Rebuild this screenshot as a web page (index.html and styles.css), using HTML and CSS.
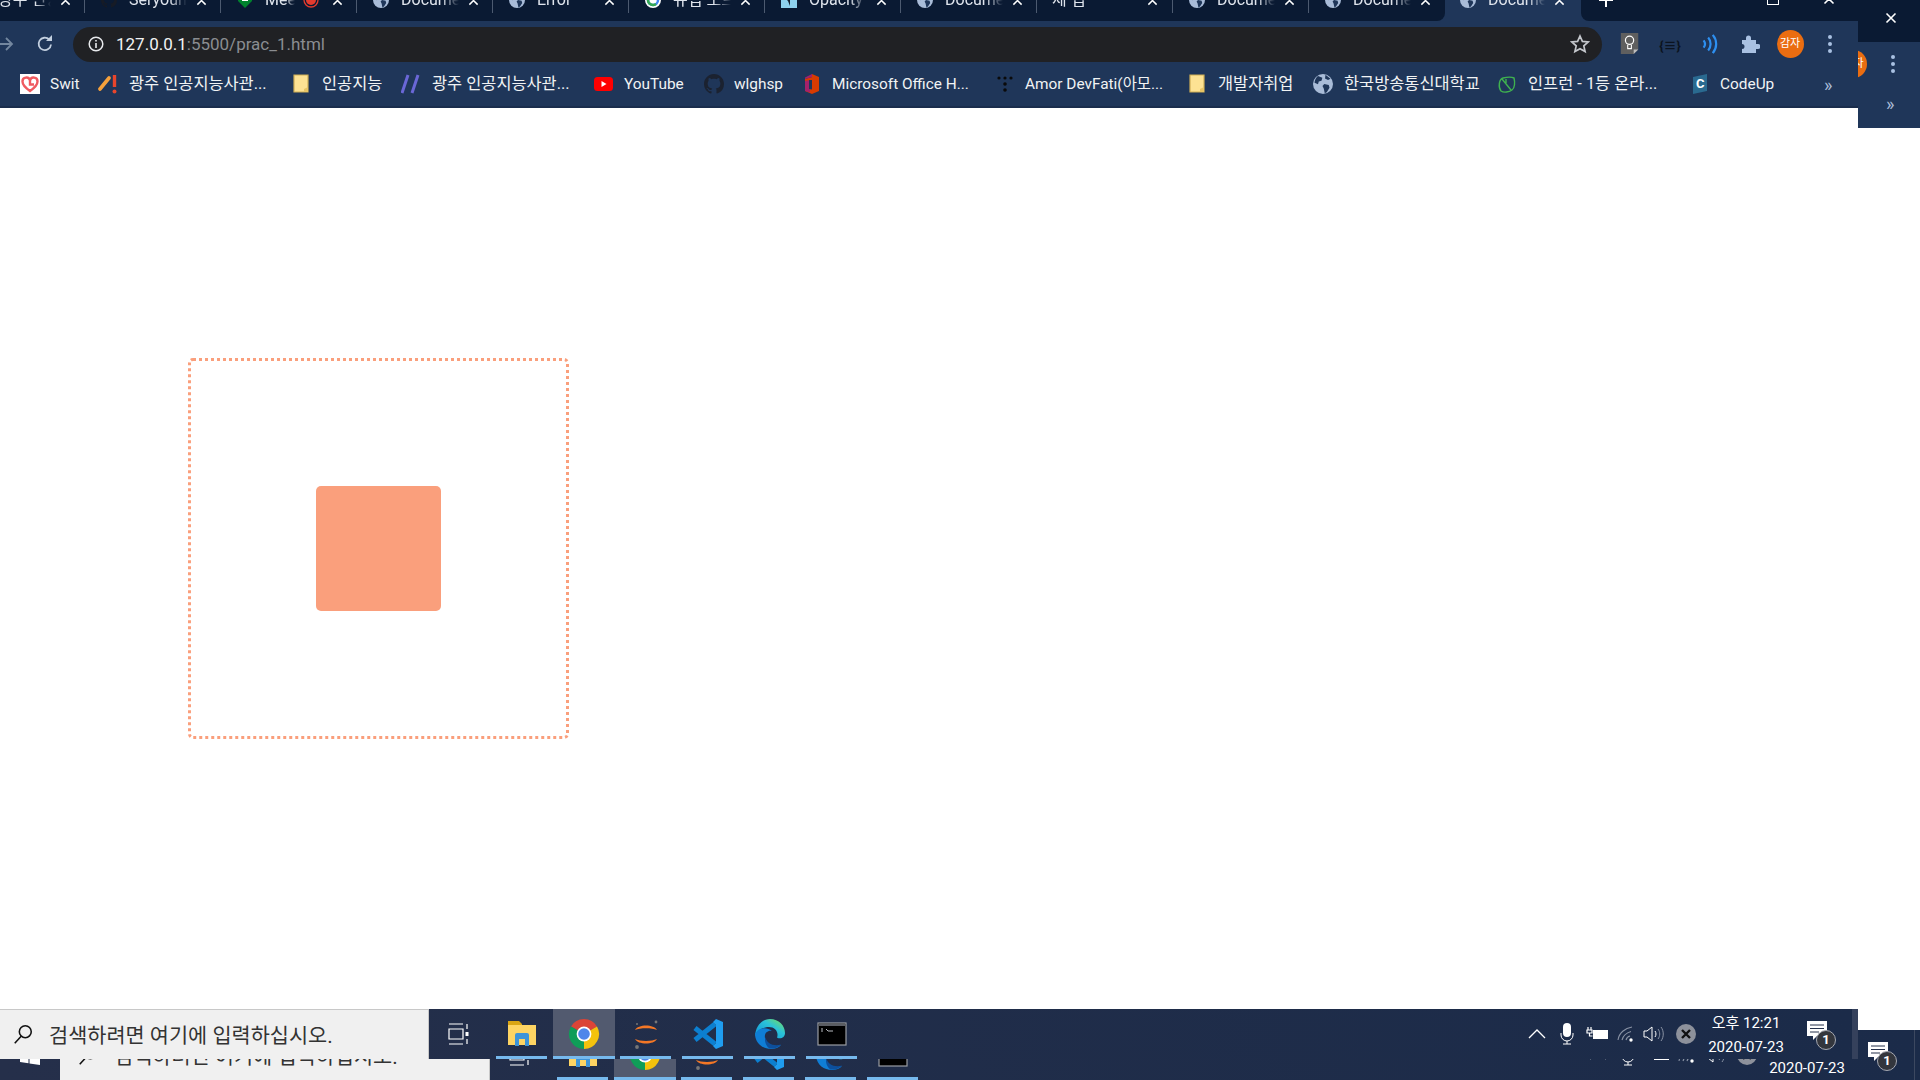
FILE: index.html
```html
<!DOCTYPE html>
<html lang="ko">
<head>
    <meta charset="UTF-8">
    <title>prac_1</title>
    <link rel="stylesheet" href="styles.css">
</head>
<body>
    <svg class="sprite" width="0" height="0">
        <defs>
            <linearGradient id="edge-top" x1="0" y1="1" x2="1" y2="0">
                <stop offset="0" stop-color="#0c8fdc"/>
                <stop offset="0.6" stop-color="#2bc3d8"/>
                <stop offset="1" stop-color="#7fe04f"/>
            </linearGradient>
            <symbol id="globe" viewBox="0 0 16 16">
                <circle cx="8" cy="8" r="8" fill="#a9bcd8"/>
                <path fill="#1f3659" d="M4 1.6 7.5 3 6.8 5.4 4.6 6 4 8.2 1.2 7C1.4 4.8 2.4 2.9 4 1.6ZM9 8l3.6.8.6 2.2L11 14.6 9.4 15.4 8.6 11.6 7.6 9.6ZM10 .6l4 3.2-2 1-2.4-1.2Z"/>
            </symbol>
            <symbol id="github" viewBox="0 0 16 16">
                <path d="M8 0C3.58 0 0 3.58 0 8c0 3.54 2.29 6.53 5.47 7.59.4.07.55-.17.55-.38 0-.19-.01-.82-.01-1.49-2.01.37-2.53-.49-2.69-.94-.09-.23-.48-.94-.82-1.13-.28-.15-.68-.52-.01-.53.63-.01 1.08.58 1.23.82.72 1.21 1.87.87 2.33.66.07-.52.28-.87.51-1.07-1.78-.2-3.64-.89-3.64-3.95 0-.87.31-1.59.82-2.15-.08-.2-.36-1.02.08-2.12 0 0 .67-.21 2.2.82.64-.18 1.32-.27 2-.27.68 0 1.36.09 2 .27 1.53-1.04 2.2-.82 2.2-.82.44 1.1.16 1.92.08 2.12.51.56.82 1.27.82 2.15 0 3.07-1.87 3.75-3.65 3.95.29.25.54.73.54 1.48 0 1.07-.01 1.93-.01 2.2 0 .21.15.46.55.38A8.013 8.013 0 0 0 16 8c0-4.42-3.58-8-8-8z"/>
            </symbol>
            <symbol id="close" viewBox="0 0 12 12">
                <path d="M1.5 1.5l9 9M10.5 1.5l-9 9" stroke="#fff" stroke-width="1.6" fill="none"/>
            </symbol>
            <symbol id="bm-folder" viewBox="0 0 16 20">
                <path d="M1 1h10l4 0v17H1Z" fill="#fde293" stroke="#cfae55" stroke-width="1.2"/>
                <path d="M15 13v5h-4v-3Z" fill="#e8c565"/>
            </symbol>
            <symbol id="chrome" viewBox="0 0 32 32">
                <path fill="#db4437" d="M16 16 3 8.5A15 15 0 0 1 29 8.5Z"/>
                <path fill="#f4c20d" d="M16 16 29 8.5A15 15 0 0 1 16 31Z"/>
                <path fill="#0f9d58" d="M16 16 16 31A15 15 0 0 1 3 8.5Z"/>
                <circle cx="16" cy="16" r="7.4" fill="#fff"/>
                <circle cx="16" cy="16" r="5.8" fill="#4d86ea"/>
            </symbol>
            <symbol id="explorer" viewBox="0 0 32 32">
                <path fill="#d9a514" d="M2 3h11l3 3v4H2Z"/>
                <path fill="#fdd463" d="M2 7h28v20H2Z"/>
                <path fill="#3d94d8" d="M9 28V17a2 2 0 0 1 2-2h10a2 2 0 0 1 2 2v11h-4v-7h-6v7Z"/>
            </symbol>
            <symbol id="jupyter" viewBox="0 0 32 32">
                <path d="M5 12C8 6 24 6 27 12 22 9.5 10 9.5 5 12ZM5 21C8 27 24 27 27 21 22 23.5 10 23.5 5 21Z" fill="#f37726"/>
                <circle cx="26" cy="4" r="1.4" fill="#767677"/>
                <circle cx="7" cy="6" r="1" fill="#767677"/>
                <circle cx="7" cy="29" r="1.9" fill="#767677"/>
            </symbol>
            <symbol id="vscode" viewBox="0 0 32 32">
                <path d="M3 10 23 26M3 22 23 6" stroke="#0c7fd0" stroke-width="5" fill="none"/>
                <path fill="#1f9df0" d="M21 4 24 1 31 4V28L24 31 21 28 24 25V7Z"/>
            </symbol>
            <symbol id="edge" viewBox="0 0 32 32">
                <path fill="url(#edge-top)" d="M16 1C25 1 31 7.5 31 15 31 20 26 21.5 23 19.5 25 14 21 9 15 9 8 9 3 13 1 18 1.5 8 8 1 16 1Z"/>
                <path fill="#0f7ed6" d="M1 17C2 26 9 31 17 31 21 31 25 29.5 27 27 20 30 12 27 11 20 10 15 14 12 18 13 12 8 3 10 1 17Z"/>
                <path fill="#0d4f9c" d="M11.5 19C12 25 20 29 27 26.5 24 30 19 31 15.5 30.5 12 28 10 23 11.5 19Z"/>
            </symbol>
            <symbol id="terminal" viewBox="0 0 32 32">
                <rect x="2" y="5" width="28" height="22" fill="#000" stroke="#9a9da3" stroke-width="1.2"/>
                <rect x="2.6" y="5.6" width="26.8" height="2.4" fill="#5a5d63"/>
                <path d="M5 11h2M5 13h2M10 11l2 2h5" stroke="#b8bbc0" stroke-width="1" fill="none"/>
            </symbol>
            <symbol id="taskview" viewBox="0 0 24 24">
                <path d="M3 2h14M3 22h14M3 7h14v10H3ZM21 2v5M21 17v5" stroke="#fff" stroke-width="1.2" fill="none"/>
                <rect x="19.5" y="10" width="3" height="4" fill="#fff"/>
            </symbol>
            <symbol id="search" viewBox="0 0 24 24">
                <circle cx="14.5" cy="9.5" r="6.5" fill="none" stroke="#111" stroke-width="1.7"/>
                <path d="M10 14.5 3 22" stroke="#111" stroke-width="1.7"/>
            </symbol>
            <symbol id="winlogo" viewBox="0 0 20 20">
                <path fill="#fff" d="M0 3 8.5 1.8V9.5H0ZM9.5 1.6 20 0V9.5H9.5ZM0 10.5H8.5V18.2L0 17ZM9.5 10.5H20V20L9.5 18.4Z"/>
            </symbol>
            <symbol id="chevron" viewBox="0 0 18 12">
                <path d="M1 10 9 2l8 8" stroke="#fff" stroke-width="1.3" fill="none"/>
            </symbol>
            <symbol id="mic" viewBox="0 0 18 22">
                <rect x="5" y="0" width="8" height="14" rx="4" fill="#fff"/>
                <path d="M3 10v2a6 6 0 0 0 12 0v-2M9 18v3M5 21h8" stroke="#fff" stroke-width="1" fill="none"/>
            </symbol>
            <symbol id="battery" viewBox="0 0 24 16">
                <path d="M3 1v3M6 1v3M2 4h5v3H2ZM4.5 7v3h3" stroke="#fff" stroke-width="1.2" fill="none"/>
                <rect x="8.5" y="4.5" width="14" height="8" fill="#fff" stroke="#fff"/>
            </symbol>
            <symbol id="wifi" viewBox="0 0 20 18">
                <path d="M1 15C2 8 8 3 15 2M5 15C6 11 9 8 14 6.5M9 15C9.5 13 11 11.5 13 11" stroke="#8a93a5" stroke-width="1.1" fill="none"/>
                <circle cx="14" cy="15" r="1.7" fill="#fff"/>
            </symbol>
            <symbol id="volume" viewBox="0 0 22 18">
                <path d="M1 6h3l5-4v14l-5-4H1ZM12 6c1.3 1.7 1.3 4.3 0 6" stroke="#fff" stroke-width="1" fill="none"/>
                <path d="M15 4c2.3 3 2.3 7 0 10M18 2c3 4 3 10 0 14" stroke="#8a93a5" stroke-width="1" fill="none"/>
            </symbol>
            <symbol id="tray-x" viewBox="0 0 20 20">
                <circle cx="10" cy="10" r="10" fill="#8d919b"/>
                <path d="M6 6l8 8M14 6l-8 8" stroke="#111" stroke-width="2.4"/>
            </symbol>
            <symbol id="notify" viewBox="0 0 22 22">
                <path fill="#fff" d="M0 0h20v15H10l-4 4v-4H0Z"/>
                <path d="M3 4h14M3 7.5h14M3 11h9" stroke="#24304b" stroke-width="1"/>
            </symbol>
        </defs>
    </svg>

    <div class="outer-screen">
        <div class="outer-chrome">
            <div class="outer-title">
                <svg class="outer-close"><use href="#close"/></svg>
            </div>
            <div class="outer-tools">
                <div class="avatar">감자</div>
                <div class="dots"><i></i><i></i><i></i></div>
            </div>
            <div class="outer-more">»</div>
        </div>
        <div class="outer-gap"></div>

        <div class="taskbar taskbar-outer">
            <div class="start"><svg class="win-icon"><use href="#winlogo"/></svg></div>
            <div class="search-box search-box-outer">
                <svg class="search-icon"><use href="#search"/></svg>
                <span class="search-text">검색하려면 여기에 입력하십시오.</span>
            </div>
            <div class="task"><svg class="task-view"><use href="#taskview"/></svg></div>
            <div class="task open"><svg class="task-icon"><use href="#explorer"/></svg></div>
            <div class="task open active"><svg class="task-icon"><use href="#chrome"/></svg></div>
            <div class="task open"><svg class="task-icon"><use href="#jupyter"/></svg></div>
            <div class="task open"><svg class="task-icon"><use href="#vscode"/></svg></div>
            <div class="task open"><svg class="task-icon"><use href="#edge"/></svg></div>
            <div class="task open"><svg class="task-icon"><use href="#terminal"/></svg></div>
            <div class="tray tray-outer">
                <svg class="tray-chevron"><use href="#chevron"/></svg>
                <svg class="tray-mic"><use href="#mic"/></svg>
                <svg class="tray-battery"><use href="#battery"/></svg>
                <svg class="tray-wifi"><use href="#wifi"/></svg>
                <svg class="tray-volume"><use href="#volume"/></svg>
                <svg class="tray-x"><use href="#tray-x"/></svg>
                <div class="clock"><span>오후 12:21</span><span>2020-07-23</span></div>
                <div class="notify">
                    <svg class="notify-icon"><use href="#notify"/></svg>
                    <span class="notify-badge">1</span>
                </div>
            </div>
            <div class="show-desktop"></div>
        </div>

        <div class="inner-screen">
            <div class="browser">
                <div class="tabstrip">
                    <div class="tabs-left">
                        <div class="tab tab-noicon tab-first"><span class="tab-title">광주 인공지능</span><svg class="tab-close"><use href="#close"/></svg></div>
                        <div class="tab">
                            <svg class="favicon favicon-git"><use href="#github"/></svg>
                            <span class="tab-title">Seryoung</span><svg class="tab-close"><use href="#close"/></svg>
                        </div>
                        <div class="tab">
                            <svg class="favicon" viewBox="0 0 16 16"><path fill="#00832d" d="M1 0h14v9l-7 7-7-7Z"/><path fill="#fff" d="M5 3h6v6H5Z"/></svg>
                            <span class="tab-title tab-title-rec">Meet</span>
                            <svg class="rec-dot" viewBox="0 0 16 16"><circle cx="8" cy="8" r="7" fill="none" stroke="#e33b2e" stroke-width="1.3"/><circle cx="8" cy="8" r="5" fill="#e33b2e"/></svg>
                            <svg class="tab-close"><use href="#close"/></svg>
                        </div>
                        <div class="tab"><svg class="favicon"><use href="#globe"/></svg><span class="tab-title">Document</span><svg class="tab-close"><use href="#close"/></svg></div>
                        <div class="tab"><svg class="favicon"><use href="#globe"/></svg><span class="tab-title">Error</span><svg class="tab-close"><use href="#close"/></svg></div>
                        <div class="tab">
                            <svg class="favicon" viewBox="0 0 16 16"><circle cx="8" cy="8" r="8" fill="#fff"/><circle cx="8" cy="8" r="5" fill="none" stroke="#4285f4" stroke-width="2.5"/><path d="M3 8a5 5 0 0 1 8-4" stroke="#ea4335" stroke-width="2.5" fill="none"/><path d="M3 8a5 5 0 0 0 8 4" stroke="#34a853" stroke-width="2.5" fill="none"/></svg>
                            <span class="tab-title">유럽 노트</span><svg class="tab-close"><use href="#close"/></svg>
                        </div>
                        <div class="tab">
                            <svg class="favicon favicon-square" viewBox="0 0 16 16"><path fill="#8ed1ee" d="M0 0h20v16H0Z"/><path fill="#12202f" d="M4 0h12L9 8v6L7 9 4 6Z"/></svg>
                            <span class="tab-title">Opacity</span><svg class="tab-close"><use href="#close"/></svg>
                        </div>
                        <div class="tab"><svg class="favicon"><use href="#globe"/></svg><span class="tab-title">Document</span><svg class="tab-close"><use href="#close"/></svg></div>
                        <div class="tab tab-noicon"><span class="tab-title">제 앱</span><svg class="tab-close"><use href="#close"/></svg></div>
                        <div class="tab"><svg class="favicon"><use href="#globe"/></svg><span class="tab-title">Document</span><svg class="tab-close"><use href="#close"/></svg></div>
                        <div class="tab tab-last"><svg class="favicon"><use href="#globe"/></svg><span class="tab-title">Document</span><svg class="tab-close"><use href="#close"/></svg></div>
                    </div>
                    <div class="tab tab-active"><svg class="favicon"><use href="#globe"/></svg><span class="tab-title">Document</span><svg class="tab-close"><use href="#close"/></svg></div>
                    <div class="tabs-right">
                        <span class="tab-plus"></span>
                        <span class="win-restore"></span>
                        <svg class="win-close"><use href="#close"/></svg>
                    </div>
                </div>

                <div class="toolbar">
                    <svg class="nav-forward" viewBox="0 0 18 18"><path d="M2 9h13M9 3l6 6-6 6" stroke="#73879f" stroke-width="1.8" fill="none"/></svg>
                    <svg class="nav-reload" viewBox="0 0 18 18"><path d="M15 9.5A6.2 6.2 0 1 1 13.2 4.5" stroke="#c3d0e0" stroke-width="1.8" fill="none"/><path fill="#c3d0e0" d="M10 6h6V0Z"/></svg>
                    <div class="omnibox">
                        <svg class="info-icon" viewBox="0 0 16 16"><circle cx="8" cy="8" r="6.8" fill="none" stroke="#e8eaed" stroke-width="1.5"/><path d="M7.2 7h1.6v5H7.2ZM7.2 4h1.6v1.6H7.2Z" fill="#e8eaed"/></svg>
                        <span class="url"><b>127.0.0.1</b>:5500/prac_1.html</span>
                        <svg class="star-icon" viewBox="0 0 20 20"><path d="M10 2l2.4 5.4 5.8.6-4.4 3.9 1.3 5.7L10 14.7l-5.1 2.9 1.3-5.7L1.8 8l5.8-.6Z" fill="none" stroke="#c4c7cc" stroke-width="1.7"/></svg>
                    </div>
                    <div class="extensions">
                        <div class="ext">
                            <svg class="ext-icon" viewBox="0 0 20 24"><path fill="#5f5f5f" d="M0 0h19v18l-5 5H0Z"/><path fill="#bdbdbd" d="M14 23l5-5h-5Z"/><circle cx="9.5" cy="8" r="4.5" fill="none" stroke="#fff" stroke-width="1.3"/><path d="M7.5 13v4h4v-4" stroke="#fff" stroke-width="1.2" fill="none"/></svg>
                        </div>
                        <div class="ext"><span class="ext-brace">{≡}</span></div>
                        <div class="ext">
                            <svg class="ext-icon" viewBox="0 0 20 24"><path d="M3 8c2 2.5 2 5.5 0 8M8 5c3.5 4 3.5 10 0 14M13 2c5 6 5 14 0 20" stroke="#2d8ff0" stroke-width="2.4" fill="none"/></svg>
                        </div>
                        <div class="ext">
                            <svg class="ext-icon" viewBox="0 0 20 20"><path fill="#a9c1e2" d="M2 6h4V4a2.5 2.5 0 0 1 5 0v2h5v4h2a2.5 2.5 0 0 1 0 5h-2v4H2v-4a2.5 2.5 0 0 0 0-5Z"/></svg>
                        </div>
                        <div class="ext"><div class="avatar">감자</div></div>
                        <div class="ext"><div class="dots"><i></i><i></i><i></i></div></div>
                    </div>
                </div>

                <div class="bookmarks">
                    <div class="bookmark">
                        <svg class="bm-icon" viewBox="0 0 20 20"><rect width="20" height="20" fill="#fff"/><path d="M10 17C5 13.5 2.5 11 2.5 7.5A3.8 3.8 0 0 1 10 6.5 3.8 3.8 0 0 1 17.5 7.5C17.5 11 15 13.5 10 17ZM10 6.5V10.5H14" fill="none" stroke="#ef5a60" stroke-width="2.4"/></svg>
                        <span>Swit</span>
                    </div>
                    <div class="bookmark">
                        <svg class="bm-icon" viewBox="0 0 20 20"><path d="M2 15 11 4" stroke="#f5a13c" stroke-width="3.6" stroke-linecap="round" fill="none"/><path d="M16.5 1v12" stroke="#e8452c" stroke-width="3.4"/><circle cx="16.5" cy="17.5" r="2" fill="#e8452c"/></svg>
                        <span class="bm-ko">광주 인공지능사관...</span>
                    </div>
                    <div class="bookmark"><svg class="bm-icon"><use href="#bm-folder"/></svg><span class="bm-ko">인공지능</span></div>
                    <div class="bookmark">
                        <svg class="bm-icon" viewBox="0 0 20 20"><path d="M7 1 1 19M17 1 11 19" stroke="#6a67d6" stroke-width="3" fill="none"/></svg>
                        <span class="bm-ko">광주 인공지능사관...</span>
                    </div>
                    <div class="bookmark">
                        <svg class="bm-icon" viewBox="0 0 20 20"><rect y="3" width="19" height="14" rx="3.5" fill="#f00"/><path fill="#fff" d="M7.5 7v6l5-3Z"/></svg>
                        <span>YouTube</span>
                    </div>
                    <div class="bookmark">
                        <svg class="bm-icon bm-git"><use href="#github"/></svg>
                        <span>wlghsp</span>
                    </div>
                    <div class="bookmark">
                        <svg class="bm-icon" viewBox="0 0 20 20"><path fill="#d83b01" d="M10 0 17 3V17L10 20 3 17V5L10 3Z"/><path fill="#a4216b" d="M3 5 10 3V0L3 3.5V17L8 18.5V6L3 7Z"/><path fill="#1f3659" d="M7 6h3v9.5L7 15Z"/></svg>
                        <span>Microsoft Office H...</span>
                    </div>
                    <div class="bookmark">
                        <svg class="bm-icon" viewBox="0 0 20 20"><g fill="#0a0a0a"><circle cx="4" cy="4" r="1.6"/><circle cx="10" cy="4" r="1.6"/><circle cx="16" cy="4" r="1.6"/><circle cx="10" cy="10" r="1.8"/><circle cx="10" cy="16" r="1.8"/></g></svg>
                        <span>Amor DevFati(아모...</span>
                    </div>
                    <div class="bookmark"><svg class="bm-icon"><use href="#bm-folder"/></svg><span class="bm-ko">개발자취업</span></div>
                    <div class="bookmark"><svg class="bm-icon"><use href="#globe"/></svg><span class="bm-ko">한국방송통신대학교</span></div>
                    <div class="bookmark">
                        <svg class="bm-icon" viewBox="0 0 20 20"><path d="M4 17C1 13 2 5 6 4c4-1 9-1 11 0 1 4 1 10-2 12-3 2-8 3-11 1ZM5 5l9 11M9 9V5" fill="none" stroke="#3fb24f" stroke-width="1.4"/></svg>
                        <span class="bm-ko">인프런 - 1등 온라...</span>
                    </div>
                    <div class="bookmark">
                        <svg class="bm-icon" viewBox="0 0 20 20"><path fill="#2a6a90" d="M3 3 17 0V17L3 20Z"/><text x="6" y="14" class="bm-c">C</text></svg>
                        <span>CodeUp</span>
                    </div>
                    <div class="bookmark-more">»</div>
                </div>
            </div>

            <main class="page">
                <div class="outer-box">
                    <div class="inner-box"></div>
                </div>
            </main>

            <div class="taskbar taskbar-inner">
                <div class="search-box">
                    <svg class="search-icon"><use href="#search"/></svg>
                    <span class="search-text">검색하려면 여기에 입력하십시오.</span>
                </div>
                <div class="task"><svg class="task-view"><use href="#taskview"/></svg></div>
                <div class="task open"><svg class="task-icon"><use href="#explorer"/></svg></div>
                <div class="task open active"><svg class="task-icon"><use href="#chrome"/></svg></div>
                <div class="task open"><svg class="task-icon"><use href="#jupyter"/></svg></div>
                <div class="task open"><svg class="task-icon"><use href="#vscode"/></svg></div>
                <div class="task open"><svg class="task-icon"><use href="#edge"/></svg></div>
                <div class="task open"><svg class="task-icon"><use href="#terminal"/></svg></div>
                <div class="tray">
                    <svg class="tray-chevron"><use href="#chevron"/></svg>
                    <svg class="tray-mic"><use href="#mic"/></svg>
                    <svg class="tray-battery"><use href="#battery"/></svg>
                    <svg class="tray-wifi"><use href="#wifi"/></svg>
                    <svg class="tray-volume"><use href="#volume"/></svg>
                    <svg class="tray-x"><use href="#tray-x"/></svg>
                    <div class="clock"><span>오후 12:21</span><span>2020-07-23</span></div>
                    <div class="notify">
                        <svg class="notify-icon"><use href="#notify"/></svg>
                        <span class="notify-badge">1</span>
                    </div>
                </div>
                <div class="show-desktop"></div>
            </div>
        </div>
    </div>
</body>
</html>
```

FILE: styles.css
```css
html, body {
    margin: 0;
    padding: 0;
    height: 100%;
    overflow: hidden;
}
body {
    font-family: Roboto, "Noto Sans CJK KR", sans-serif;
    background-color: #fff;
}
.sprite {
    position: absolute;
}
svg {
    display: block;
    flex-shrink: 0;
}

/* the screen photographed behind */
.outer-screen {
    position: relative;
    width: 1920px;
    height: 1080px;
    display: flex;
    flex-direction: column;
    overflow: hidden;
}
.outer-chrome {
    width: 62px;
    height: 128px;
    margin-left: auto;
    background-color: #1f3659;
}
.outer-title {
    height: 42px;
    background-color: #0a1a33;
    padding-left: 27px;
    box-sizing: border-box;
    padding-top: 12px;
}
.outer-close {
    width: 12px;
    height: 12px;
}
.outer-tools {
    height: 44px;
    display: flex;
    align-items: center;
}
.outer-tools .avatar {
    margin-left: -18px;
}
.outer-tools .dots {
    margin-left: 24px;
}
.outer-more {
    color: #a9bcd8;
    font-size: 18px;
    line-height: 36px;
    padding-left: 28px;
}
.outer-gap {
    flex: 1;
}

/* the screen on top */
.inner-screen {
    position: absolute;
    left: 0;
    top: 0;
    width: 1858px;
    height: 1059px;
    display: flex;
    flex-direction: column;
    background-color: #fff;
}

/* tabs */
.tabstrip {
    height: 21px;
    display: flex;
    background-color: #1f3659;
    overflow: hidden;
}
.tabs-left {
    width: 1445px;
    height: 21px;
    display: flex;
    background-color: #0a1a33;
    border-bottom-right-radius: 8px;
    overflow: hidden;
    flex-shrink: 0;
}
.tab {
    width: 136px;
    height: 26px;
    margin-top: -13px;
    flex-shrink: 0;
    box-sizing: border-box;
    display: flex;
    align-items: center;
    padding-left: 16px;
    border-right: 1px solid #4c5a70;
}
.tab-last, .tab-active {
    border-right: none;
}
.tab-noicon {
    padding-left: 15px;
}
.tabs-left .tab-first {
    margin-left: -51px;
    padding-left: 49px;
}
.favicon {
    width: 16px;
    height: 16px;
}
.favicon-git {
    fill: #161b26;
}
.tab-title {
    width: 58px;
    margin-left: 12px;
    color: #dfe4ec;
    font-size: 16px;
    line-height: 20px;
    white-space: nowrap;
    overflow: hidden;
    -webkit-mask-image: linear-gradient(to right, #000 70%, transparent);
    mask-image: linear-gradient(to right, #000 70%, transparent);
}
.tab-noicon .tab-title {
    margin-left: 0;
    width: 86px;
}
.tab-first .tab-title {
    width: 53px;
}
.tab-title-rec {
    width: 30px;
}
.rec-dot {
    width: 16px;
    height: 16px;
    margin-left: 8px;
    margin-right: 4px;
}
.tab-close {
    width: 11px;
    height: 11px;
    margin-left: 9px;
}
.tab-active {
    background-color: #1f3659;
    height: 34px;
    padding-left: 15px;
    padding-bottom: 8px;
}
.tab-active .tab-title {
    width: 57px;
}
.tabs-right {
    flex: 1;
    height: 21px;
    display: flex;
    background-color: #0a1a33;
    border-bottom-left-radius: 8px;
    overflow: hidden;
}
.tab-plus {
    width: 14px;
    height: 14px;
    margin: -7px 0 0 18px;
    background: linear-gradient(#fff, #fff) center / 2px 100% no-repeat, linear-gradient(#fff, #fff) center / 100% 2px no-repeat;
}
.win-restore {
    width: 10px;
    height: 8px;
    margin: -5px 0 0 154px;
    border: 1px solid #fff;
}
.win-close {
    width: 12px;
    height: 12px;
    margin: -7px 0 0 44px;
}

/* toolbar */
.toolbar {
    height: 41px;
    display: flex;
    align-items: center;
    background-color: #1f3659;
    padding-top: 5px;
    box-sizing: border-box;
}
.nav-forward {
    width: 18px;
    height: 18px;
    margin-left: -3px;
}
.nav-reload {
    width: 18px;
    height: 18px;
    margin-left: 21px;
}
.omnibox {
    width: 1529px;
    height: 35px;
    margin-left: 19px;
    box-sizing: border-box;
    background-color: #202124;
    border-radius: 18px;
    padding: 0 12px 0 15px;
    display: flex;
    align-items: center;
}
.info-icon {
    width: 16px;
    height: 16px;
}
.url {
    margin-left: 12px;
    font-size: 17px;
    color: #8a8d91;
    flex: 1;
}
.url b {
    font-weight: 400;
    color: #f1f3f4;
}
.star-icon {
    width: 20px;
    height: 20px;
}
.extensions {
    display: flex;
    margin-left: 8px;
}
.ext {
    width: 40px;
    height: 35px;
    display: flex;
    align-items: center;
    justify-content: center;
}
.ext-icon {
    width: 20px;
    height: 22px;
}
.ext-brace {
    color: #0b1320;
    font-size: 13px;
    font-weight: 700;
}
.avatar {
    width: 27px;
    height: 28px;
    flex-shrink: 0;
    border-radius: 50%;
    background-color: #ea6d11;
    color: #fff;
    font-size: 11px;
    line-height: 28px;
    text-align: center;
}
.dots {
    display: flex;
    flex-direction: column;
    gap: 3px;
}
.dots i {
    display: block;
    width: 4px;
    height: 4px;
    border-radius: 50%;
    background-color: #a9c1e2;
}

/* bookmarks */
.bookmarks {
    height: 46px;
    box-sizing: border-box;
    padding-left: 20px;
    background-color: #1f3659;
    border-bottom: 2px solid #1a2d4c;
    display: grid;
    grid-template-columns: 78px 193px 110px 193px 110px 98px 193px 192px 126px 184px 193px 120px auto;
    align-items: center;
    color: #f1f3f4;
    font-size: 15.4px;
}
.bookmark {
    display: flex;
    align-items: center;
    white-space: nowrap;
}
.bookmark span {
    line-height: 20px;
}
.bookmark .bm-ko {
    font-size: 16.4px;
    margin-left: 1px;
}
.bm-icon {
    width: 20px;
    height: 20px;
    margin-right: 10px;
}
.bm-git {
    fill: #1b2230;
}
.bm-c {
    font-size: 13px;
    font-weight: 700;
    fill: #fff;
}
.bookmark-more {
    color: #a9bcd8;
    font-size: 18px;
    padding-left: 14px;
}

/* page content */
.page {
    flex: 1;
    padding: 250px 0 0 188px;
}
.outer-box {
    width: 381px;
    height: 381px;
    box-sizing: border-box;
    border: 3px dotted #fa9f7c;
    border-radius: 5px;
    display: flex;
    justify-content: center;
    align-items: center;
}
.inner-box {
    width: 125px;
    height: 125px;
    background-color: #fa9f7c;
    border-radius: 5px;
}

/* taskbars */
.taskbar {
    height: 50px;
    flex-shrink: 0;
    display: flex;
    background: linear-gradient(to right, #252f4a, #1b2b49);
}
.start {
    width: 60px;
    display: flex;
    justify-content: center;
    align-items: center;
}
.win-icon {
    width: 20px;
    height: 20px;
}
.search-box {
    width: 429px;
    box-sizing: border-box;
    background-color: #f0f0f0;
    border-top: 1px solid #c8c8c8;
    border-right: 1px solid #c8c8c8;
    display: flex;
    align-items: center;
    padding-left: 12px;
    padding-bottom: 2px;
    color: #333;
    font-size: 20.8px;
}
.search-box-outer {
    width: 430px;
    padding-left: 17px;
}
.search-icon {
    width: 22px;
    height: 22px;
}
.search-text {
    margin-left: 15px;
    white-space: nowrap;
}
.task {
    width: 62px;
    box-sizing: border-box;
    display: flex;
    justify-content: center;
    align-items: center;
    position: relative;
}
.open::after {
    content: "";
    position: absolute;
    left: 5px;
    right: 6px;
    bottom: 0;
    height: 3px;
    background-color: #76b9ed;
}
.active {
    background-color: #525a6f;
}
.active::after {
    left: 0;
    right: 0;
}
.task-icon {
    width: 32px;
    height: 32px;
}
.task-view {
    width: 24px;
    height: 24px;
    margin-right: 4px;
}
.tray {
    margin-left: auto;
    display: grid;
    grid-template-columns: 30px 29px 32px 28px 25px 40px 80px 66px;
    justify-items: center;
    align-items: center;
    color: #fff;
}
.tray-outer {
    margin-right: 1px;
}
.tray-chevron {
    width: 18px;
    height: 12px;
}
.tray-mic {
    width: 18px;
    height: 22px;
}
.tray-battery {
    width: 24px;
    height: 16px;
}
.tray-wifi {
    width: 20px;
    height: 18px;
}
.tray-volume {
    width: 22px;
    height: 18px;
}
.tray-x {
    width: 20px;
    height: 20px;
}
.clock {
    display: flex;
    flex-direction: column;
    align-items: center;
    gap: 4px;
    padding-top: 2px;
    font-size: 15px;
    line-height: 20px;
    white-space: nowrap;
}
.notify {
    position: relative;
    width: 24px;
    height: 26px;
}
.notify-icon {
    width: 22px;
    height: 22px;
}
.notify-badge {
    position: absolute;
    left: 9px;
    top: 9px;
    width: 20px;
    height: 20px;
    box-sizing: border-box;
    border: 1px solid #a6a9b2;
    border-radius: 50%;
    background-color: #33363d;
    font-size: 13px;
    font-weight: 700;
    line-height: 18px;
    text-align: center;
}
.show-desktop {
    width: 6px;
    background-color: #35415c;
}
.taskbar-outer .show-desktop {
    width: 5px;
    background: none;
    border-left: 1px solid #3c4860;
}
```
